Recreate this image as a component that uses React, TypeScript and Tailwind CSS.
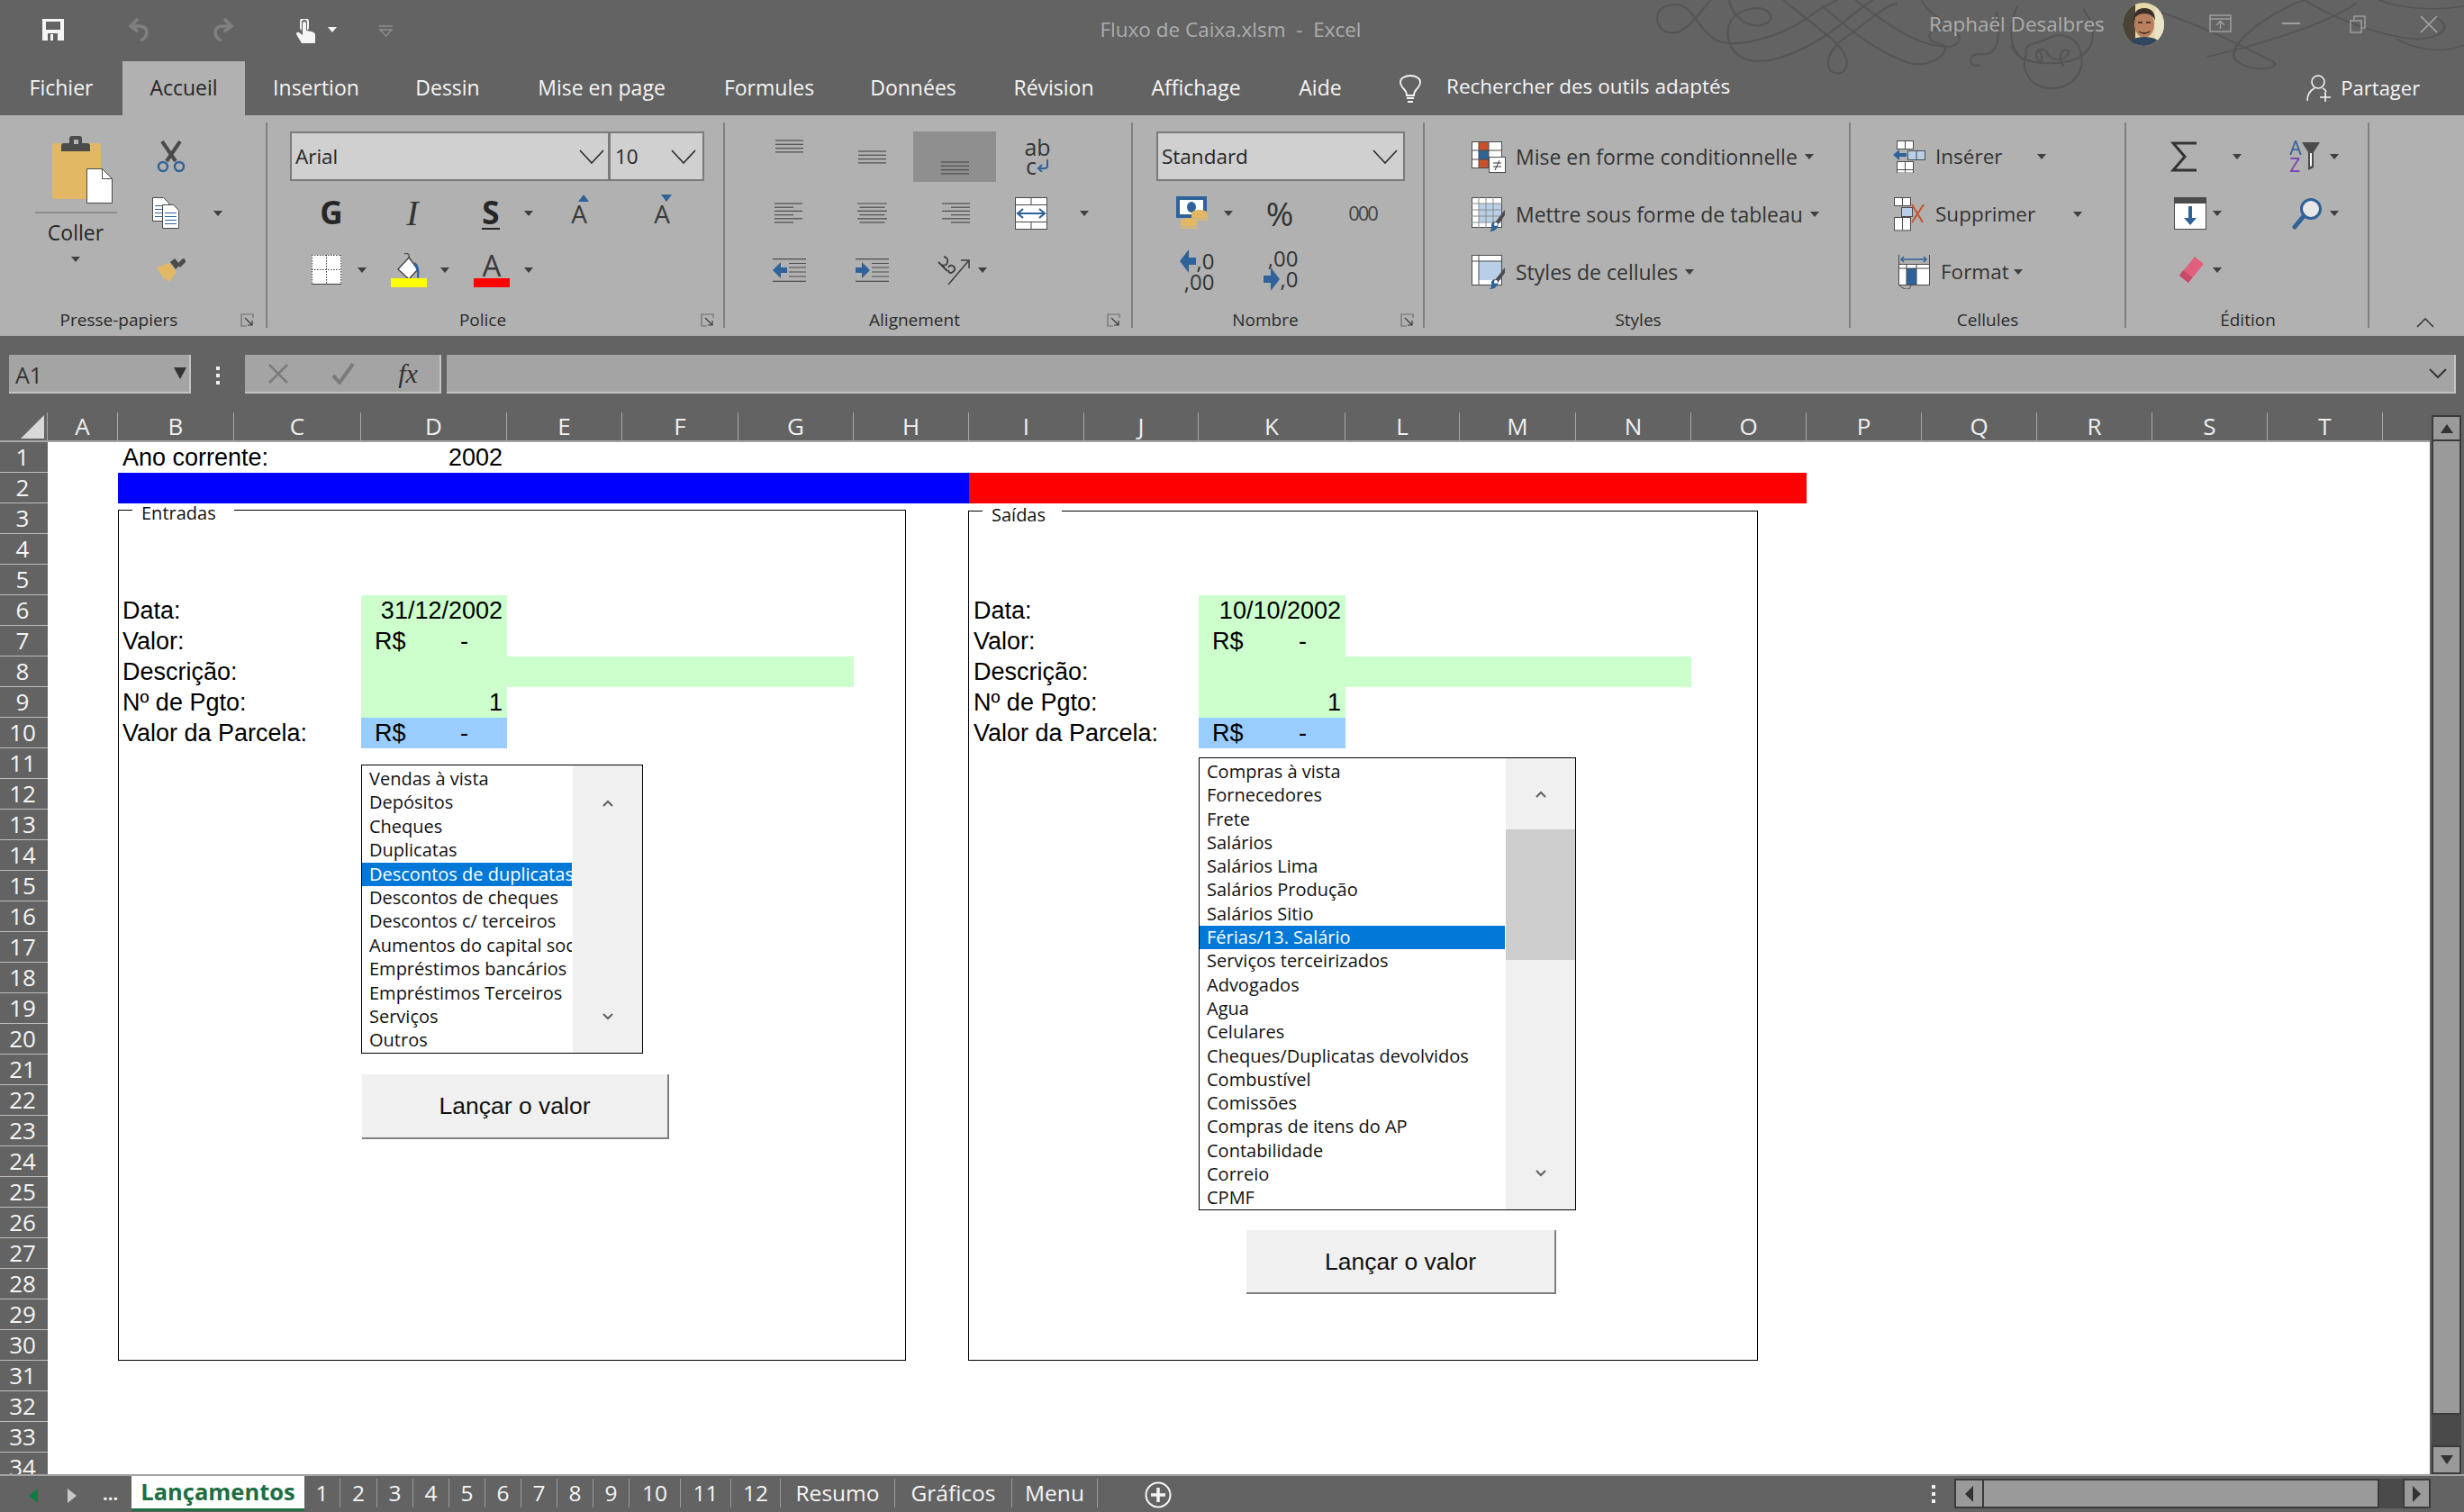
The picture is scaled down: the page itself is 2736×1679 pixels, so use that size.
import type { ReactNode } from 'react';

const SHEET_COLS =
  'grid-cols-[78px_129px_141px_162px_128px_129px_128px_128px_128px_127px_163px_127px_129px_128px_128px_128px_128px_128px_128px_128px_52px]';
const LETTERS = 'ABCDEFGHIJKLMNOPQRST'.split('');
const ROWS = Array.from({ length: 34 }, (_, i) => i + 1);

const ENTRADAS = [
  'Vendas à vista', 'Depósitos', 'Cheques', 'Duplicatas', 'Descontos de duplicatas', 'Descontos de cheques',
  'Descontos c/ terceiros', 'Aumentos do capital social', 'Empréstimos bancários', 'Empréstimos Terceiros', 'Serviços', 'Outros',
];
const SAIDAS = [
  'Compras à vista', 'Fornecedores', 'Frete', 'Salários', 'Salários Lima', 'Salários Produção', 'Salários Sitio',
  'Férias/13. Salário', 'Serviços terceirizados', 'Advogados', 'Agua', 'Celulares', 'Cheques/Duplicatas devolvidos',
  'Combustível', 'Comissões', 'Compras de itens do AP', 'Contabilidade', 'Correio', 'CPMF',
];

const TABS = [
  { label: 'Fichier', w: 'w-[136px]' },
  { label: 'Accueil', w: 'w-[136px]', active: true },
  { label: 'Insertion', w: 'w-[158px]' },
  { label: 'Dessin', w: 'w-[134px]' },
  { label: 'Mise en page', w: 'w-[208px]' },
  { label: 'Formules', w: 'w-[164px]' },
  { label: 'Données', w: 'w-[156px]' },
  { label: 'Révision', w: 'w-[156px]' },
  { label: 'Affichage', w: 'w-[160px]' },
  { label: 'Aide', w: 'w-[116px]' },
];

const SHEET_TABS = [
  { label: '1', w: 'w-[40px]' }, { label: '2', w: 'w-[41px]' }, { label: '3', w: 'w-[40px]' }, { label: '4', w: 'w-[40px]' },
  { label: '5', w: 'w-[40px]' }, { label: '6', w: 'w-[40px]' }, { label: '7', w: 'w-[40px]' }, { label: '8', w: 'w-[40px]' },
  { label: '9', w: 'w-[40px]' }, { label: '10', w: 'w-[57px]' }, { label: '11', w: 'w-[56px]' }, { label: '12', w: 'w-[55px]' },
  { label: 'Resumo', w: 'w-[127px]' }, { label: 'Gráficos', w: 'w-[130px]' }, { label: 'Menu', w: 'w-[95px]' },
];

function Cell({ className = '', children }: { className?: string; children?: ReactNode }) {
  return <div className={`flex shrink-0 items-center justify-center ${className}`}>{children}</div>;
}

function Caret({ color = '#3f3f3f' }: { color?: string }) {
  return (
    <svg width="10" height="6" viewBox="0 0 10 6">
      <path d="M0 0h10L5 6z" fill={color} />
    </svg>
  );
}

function Chevron() {
  return (
    <svg width="28" height="16" viewBox="0 0 28 16" fill="none" stroke="#2b2b2b" strokeWidth="1.6">
      <path d="M1 1l13 14L27 1" />
    </svg>
  );
}

function Launcher() {
  return (
    <svg width="15" height="15" viewBox="0 0 15 15" fill="none" stroke="#3a3a3a" strokeWidth="1.2">
      <path d="M14 5V1H1v13h6" stroke="#6f6f6f" />
      <path d="M5 5l8 8M13 8v5H8" />
    </svg>
  );
}

// ---- Icônes du ruban, dessinées à la taille du pixel ----

function PasteIcon() {
  return (
    <svg width="91" height="76" viewBox="38 151 91 76">
      <rect x="57" y="159" width="54" height="62" rx="3" fill="#e3b865" />
      <path d="M67 168v-6q0-3 3-3h6v-5q0-3 3-3h8q3 0 3 3v5h6q3 0 3 3v6z" fill="#4b4b4b" />
      <rect x="81" y="155" width="5" height="5" fill="#b5b5b5" />
      <path d="M95.500 187.500h17l11 11v27h-28z" fill="#fff" stroke="#4b4b4b" />
      <path d="M112.500 187.500v11h11" fill="none" stroke="#4b4b4b" />
    </svg>
  );
}

function ScissorsIcon() {
  return (
    <svg width="32" height="36" viewBox="0 0 32 36" fill="none">
      <path d="M6 1l15 22M26 1L11 23" stroke="#4a4a4a" strokeWidth="4" />
      <circle cx="7" cy="29" r="5" stroke="#2f6299" strokeWidth="2.4" />
      <circle cx="25" cy="29" r="5" stroke="#2f6299" strokeWidth="2.4" />
    </svg>
  );
}

function CopyIcon() {
  const page = (x: number, y: number) => (
    <g key={x} transform={`translate(${x} ${y})`}>
      <path d="M.5.500h12l6 6v20H.5z" fill="#fff" stroke="#4b4b4b" />
      <path d="M3 9.500h13M3 13.500h13M3 17.500h13M3 21.500h13" stroke="#2f6299" />
    </g>
  );
  return (
    <svg width="31" height="35" viewBox="0 0 31 35">
      {page(0, 0)}
      {page(11, 8)}
    </svg>
  );
}

function BrushIcon() {
  return (
    <svg width="34" height="28" viewBox="0 0 34 28">
      <path d="M1 11l14-5 8 10-8 11-4-4-2 1z" fill="#e3b865" />
      <path d="M16 5l5-4 6 7-5 5z" fill="#4b4b4b" />
      <path d="M24 7l6-6q3 0 3 4l-6 6z" fill="#4b4b4b" />
    </svg>
  );
}

function BordersIcon() {
  return (
    <svg width="33" height="33" viewBox="0 0 33 33">
      <rect width="33" height="33" fill="#fff" />
      <path
        d="M.5 0v33M16.500 0v33M32.500 0v33M0 .5h33M0 16.500h33"
        stroke="#444"
        strokeDasharray="1.500 1.500"
        fill="none"
      />
      <path d="M0 32.500h33" stroke="#444" />
    </svg>
  );
}

function BucketIcon() {
  return (
    <svg width="40" height="38" viewBox="0 0 40 38">
      <path d="M15 1q3-2 5 1l1 6" fill="none" stroke="#4b4b4b" strokeWidth="1.300" />
      <path d="M20 5l10 13-10 11L8 18z" fill="#fff" stroke="#3f3f3f" strokeWidth="1.300" />
      <path d="M27 10q6 5 4 18l-2-1q1-9-4-14z" fill="#2f6299" />
      <rect y="28" width="40" height="10" fill="#ffff00" />
    </svg>
  );
}

function LinesIcon({ kind }: { kind: 'top' | 'middle' | 'bottom' }) {
  const start = kind === 'top' ? 10 : kind === 'middle' ? 22 : 34;
  return (
    <svg width="31" height="56" viewBox="0 0 31 56" stroke="#4d4d4d" strokeWidth="1.200">
      {[0, 1, 2, 3].map((i) => (
        <path key={i} d={`M0 ${start + i * 4.300}h31`} />
      ))}
    </svg>
  );
}

function AlignIcon({ kind }: { kind: 'left' | 'center' | 'right' }) {
  const rows = kind === 'center' ? [33, 28, 33, 28, 33, 28] : [31, 21, 31, 21, 31, 21];
  return (
    <svg width="33" height="24" viewBox="0 0 33 24" stroke="#4d4d4d" strokeWidth="1.200">
      {rows.map((w, i) => {
        const x = kind === 'left' ? 0 : kind === 'right' ? 33 - w : (33 - w) / 2;
        return <path key={i} d={`M${x} ${1 + i * 4.200}h${w}`} />;
      })}
    </svg>
  );
}

function IndentIcon({ dir }: { dir: 'out' | 'in' }) {
  return (
    <svg width="37" height="26" viewBox="0 0 37 26">
      <path d="M0 .7h37M0 25.300h37M18 5.500h19M18 10h19M18 15h19M18 20h19" stroke="#4d4d4d" strokeWidth="1.200" />
      {dir === 'out' ? (
        <path d="M9 4v6h7v6H9v6l-9-9z" fill="#2f6299" />
      ) : (
        <path d="M7 4v6H0v6h7v6l9-9z" fill="#2f6299" />
      )}
    </svg>
  );
}

function MergeIcon() {
  return (
    <svg width="36" height="36" viewBox="0 0 36 36">
      <rect x=".5" y=".5" width="35" height="35" fill="#fff" stroke="#4b4b4b" />
      <path d="M0 8.500h36M0 27.500h36M18 0v8M18 28v8" stroke="#4b4b4b" fill="none" />
      <path d="M3 18h30M9 13l-6 5 6 5M27 13l6 5-6 5" fill="none" stroke="#2f6299" strokeWidth="2.200" />
    </svg>
  );
}

function OrientationIcon() {
  return (
    <svg width="42" height="34" viewBox="0 0 42 34" fill="none" stroke="#3d3d3d" strokeWidth="1.500">
      <path d="M14 33L37 6M28 6h9v9" />
      <path d="M3 8l10 10M9 2q5 1 4 6t-6 3M14 14q3-4 6-1t-1 6-5-2" strokeWidth="1.800" />
    </svg>
  );
}

function WrapIcon() {
  return (
    <div className="flex flex-col items-center leading-none text-[#333]">
      <span className="text-[25px] leading-[20px]">ab</span>
      <span className="flex items-center text-[25px] leading-[22px]">
        c
        <svg width="14" height="14" viewBox="0 0 14 14" fill="none" stroke="#2f6299" strokeWidth="2">
          <path d="M12 0v7q0 3-3 3H2M6 6l-4 4 4 4" />
        </svg>
      </span>
    </div>
  );
}

function MoneyIcon() {
  return (
    <svg width="36" height="38" viewBox="0 0 36 38">
      <rect x="2" y="2" width="30" height="20" fill="#fff" stroke="#2f6299" strokeWidth="4" />
      <ellipse cx="17" cy="12" rx="5" ry="6" fill="#2f6299" />
      <ellipse cx="26" cy="19" rx="9" ry="4" fill="#e3b865" />
      <rect x="17" y="19" width="18" height="8" fill="#e3b865" />
      <path d="M17 24q9 3 18 0M17 28q9 3 18 0" stroke="#b1b1b1" fill="none" />
      <ellipse cx="14" cy="28" rx="9" ry="4" fill="#e3b865" />
      <rect x="5" y="28" width="18" height="8" fill="#e3b865" />
      <path d="M5 33q9 3 18 0" stroke="#b1b1b1" fill="none" />
    </svg>
  );
}

function BlueArrow({ dir }: { dir: 'left' | 'right' }) {
  return (
    <svg width="18" height="26" viewBox="0 0 18 26">
      {dir === 'left' ? <path d="M10 0v9h8v8h-8v9L0 13z" fill="#2f6299" /> : <path d="M8 0v9H0v8h8v9l10-13z" fill="#2f6299" />}
    </svg>
  );
}

function CondFormatIcon() {
  return (
    <svg width="38" height="35" viewBox="0 0 38 35">
      <rect x=".5" y=".5" width="33" height="29" fill="#fff" stroke="#4b4b4b" />
      <rect x="8" y="1" width="11" height="9" fill="#c8502c" />
      <rect x="8" y="10" width="11" height="10" fill="#2f6299" />
      <rect x="8" y="20" width="11" height="9" fill="#c8502c" />
      <path d="M8 0v30M19 0v30M0 10h34M0 20h34" stroke="#4b4b4b" />
      <rect x="19.500" y="17.500" width="18" height="17" fill="#fff" stroke="#4b4b4b" />
      <path d="M24 24h9M24 28h9M31 21l-5 11" stroke="#333" />
    </svg>
  );
}

function TableIcon({ plain = false }: { plain?: boolean }) {
  return (
    <svg width="38" height="38" viewBox="0 0 38 38">
      <rect x=".5" y=".5" width="33" height="33" fill="#fff" stroke="#4b4b4b" />
      <rect x="8" y="7" width="25" height="21" fill="#b9cfe8" />
      {plain ? (
        <path d="M0 7h34M8 0v34" stroke="#4b4b4b" />
      ) : (
        <path d="M0 7h34M0 14h34M0 21h34M0 28h34M8 0v34M16 0v34M24 0v34" stroke="#8a8a8a" />
      )}
      <path d="M37 14L26 28l3 3 8-11z" fill="#4b4b4b" />
      <path d="M25 27q6 2 4 6-2 5-9 5 3-3 2-6t3-5z" fill="#2f6299" />
      <circle cx="27" cy="30" r="2" fill="#fff" />
    </svg>
  );
}

function MiniCells({ x = 0, y = 0, rows, cols }: { x?: number; y?: number; rows: number; cols: number }) {
  const w = 9 * cols;
  const h = 9 * rows;
  return (
    <g transform={`translate(${x} ${y})`}>
      <rect x=".5" y=".5" width={w} height={h} fill="#fff" stroke="#4b4b4b" />
      {Array.from({ length: cols - 1 }, (_, i) => (
        <path key={`c${i}`} d={`M${9 * (i + 1) + 0.5} 0v${h}`} stroke="#4b4b4b" />
      ))}
      {Array.from({ length: rows - 1 }, (_, i) => (
        <path key={`r${i}`} d={`M0 ${9 * (i + 1) + 0.5}h${w}`} stroke="#4b4b4b" />
      ))}
    </g>
  );
}

function InsertIcon() {
  return (
    <svg width="37" height="36" viewBox="0 0 37 36">
      <MiniCells x={4} rows={1} cols={2} />
      <MiniCells x={4} y={23} rows={1} cols={2} />
      <MiniCells x={4} y={32} rows={0.4} cols={2} />
      <rect x="16.500" y="11.500" width="19" height="10" fill="#b9cfe8" stroke="#4b4b4b" />
      <path d="M26 11v11" stroke="#4b4b4b" />
      <path d="M0 16l7-6v4h8v4H7v4z" fill="#2f6299" />
    </svg>
  );
}

function DeleteIcon() {
  return (
    <svg width="37" height="38" viewBox="0 0 37 38">
      <MiniCells x={1} rows={1} cols={2} />
      <MiniCells x={1} y={22} rows={1.600} cols={2} />
      <rect x="9.500" y="11.500" width="12" height="10" fill="#b9cfe8" stroke="#4b4b4b" />
      <path d="M21 8l12 20M34 8L21 28" stroke="#c8502c" strokeWidth="2" />
    </svg>
  );
}

function FormatIcon() {
  return (
    <svg width="36" height="38" viewBox="0 0 36 38">
      <path d="M3 5h28M6 2L3 5l3 3M28 2l3 3-3 3" fill="none" stroke="#2f6299" strokeWidth="1.500" />
      <path d="M.5 0v10M34.500 0v10" stroke="#4b4b4b" />
      <rect x=".5" y="10.500" width="34" height="23" fill="#fff" stroke="#4b4b4b" />
      <rect x="9" y="15" width="11" height="18" fill="#2f6299" />
      <path d="M9 10v24M20 10v24M0 15h35M1 34l6 4h5l2-4" stroke="#4b4b4b" fill="none" />
    </svg>
  );
}

function FillIcon() {
  return (
    <svg width="36" height="36" viewBox="0 0 36 36">
      <rect x=".5" y=".5" width="35" height="35" fill="#fff" stroke="#4b4b4b" />
      <rect width="36" height="7" fill="#4b4b4b" />
      <path d="M16 10h4v13h5l-7 8-7-8h5z" fill="#2f6299" />
    </svg>
  );
}

function FindIcon() {
  return (
    <svg width="34" height="36" viewBox="0 0 34 36" fill="none">
      <circle cx="21" cy="13" r="10.500" fill="#e8e8e8" stroke="#2f6299" strokeWidth="3" />
      <path d="M13 21L3 33" stroke="#2f6299" strokeWidth="5" strokeLinecap="round" />
    </svg>
  );
}

function EraserIcon() {
  return (
    <svg width="30" height="30" viewBox="0 0 30 30">
      <path d="M20 0l10 8-17 21-10-8z" fill="#df5f7d" />
      <path d="M7 15l10 8-4 6-10-8z" fill="#c9496a" />
    </svg>
  );
}

function SortIcon() {
  return (
    <div className="flex items-center">
      <div className="flex flex-col text-[21px] leading-[19px]">
        <span className="text-[#2f6299]">A</span>
        <span className="text-[#7a3fb0]">Z</span>
      </div>
      <svg width="20" height="32" viewBox="0 0 20 32">
        <path d="M0 0h20l-7 11v17l-6 3V11z" fill="#4b4b4b" />
        <path d="M9 12h2v14l-2 1z" fill="#fff" />
      </svg>
    </div>
  );
}

// ---- Éléments de la barre de titre ----

function SaveIcon() {
  return (
    <svg width="24" height="24" viewBox="0 0 24 24">
      <path d="M0 0h24v24H0z" fill="#f5f5f5" />
      <rect x="4" y="3" width="16" height="9" fill="#636363" />
      <rect x="6" y="16" width="11" height="8" fill="#636363" />
      <rect x="9" y="17" width="3" height="7" fill="#f5f5f5" />
    </svg>
  );
}

function UndoIcon({ flip = false }: { flip?: boolean }) {
  return (
    <svg
      width="24"
      height="26"
      viewBox="0 0 24 26"
      fill="none"
      stroke="#808080"
      strokeWidth="3.500"
      className={flip ? '-scale-x-100' : ''}
    >
      <path d="M11 1L3 9l8 6" />
      <path d="M3 9h9q9 0 9 7 0 6-7 9" />
    </svg>
  );
}

function TouchIcon() {
  return (
    <svg width="22" height="27" viewBox="0 0 22 27" fill="#f5f5f5">
      <path d="M5 3a5 5 0 0 1 10 0v7a5 5 0 0 1-2 3V4a3 3 0 0 0-6 0v9a5 5 0 0 1-2-3z" />
      <path d="M8 5a2 2 0 0 1 4 0v8l6 1q4 1 4 4v9H7L1 17q0-3 3-2l4 3z" />
    </svg>
  );
}

// Arabesques du thème Office, en filigrane derrière la barre de titre
function Swirls() {
  return (
    <svg
      className="pointer-events-none absolute right-0 top-0"
      width="1000"
      height="128"
      viewBox="1736 0 1000 128"
      fill="none"
      stroke="#555555"
      strokeWidth="2.200"
    >
      <g transform="translate(1840 0) scale(0.3333)" strokeWidth="6.500">
        <path d="M180 0C140 40 100 110 50 110 15 110 0 80 0 60 0 30 30 15 60 15c60 0 70 75 130 115 60 35 210 0 310-70 40-30 70-45 100-60" />
        <path d="M240 0c5 40 50 90 100 85 35-5 50-25 30-45-30-25-100-10-125 30-20 40-10 100 45 125 60 25 160-5 270-75C620 80 680 20 720 0" />
        <path d="M420 0c50 40 100 80 150 120 50 40 70 80 60 105-15 30-55 25-60-10-5-35 30-75 80-105C700 70 760 20 800 10" />
        <path d="M550 20c70 60 170 150 290 190 60 15 120-20 120-50 0-20-40-10-50-30-15-35 40-50 90-20 20 20 0 50-40 45C850 150 740 60 660 0" />
        <path d="M880 0c20 40 50 50 70 70" />
        <path d="M1130 40c15 60 10 130-30 140-20 5-40-10-55 15-5 20 15 30 30 20" />
        <path d="M1200 20c-30 70-30 140 20 180" />
        <path d="M1180 150c10 40 50 55 100 60 80 5 140-10 165-60 20-50-5-90-25-120" />
        <path d="M1270 170c20 10 10 60 0 30-20-30 10-50 30-25 20 45 80 15 70-5-20-15-40 20-15 50" />
        <path d="M1230 180c-20 50 10 110 80 115 80 0 120-65 100-125-10-40-60-70-110-40-40 20-80 10-70 50" />
      </g>
      <g transform="translate(1736 0) scale(0.6378 0.3333)" strokeWidth="4.500">
        <path d="M1040 40c60 40 130 100 190 160 30 25-30 50-60 0-20-50 60-160 120-200" />
        <path d="M1290 0c50 60 130 120 190 130 50 0 70-40 40-70" />
        <path d="M1380 10c-40 60-150 130-260 180" />
        <path d="M1420 0c50 40 120 30 148 20" />
        <path d="M1450 130c50 50 90 40 118 20" />
      </g>
    </svg>
  );
}

function Avatar() {
  return (
    <svg width="46" height="48" viewBox="0 0 46 48">
      <clipPath id="avatar">
        <ellipse cx="23" cy="24" rx="23" ry="24" />
      </clipPath>
      <g clipPath="url(#avatar)">
        <rect width="46" height="48" fill="#e6d9a8" />
        <rect width="14" height="48" fill="#4b4436" />
        <rect x="36" width="10" height="48" fill="#e9e4c8" />
        <ellipse cx="24" cy="24" rx="11" ry="15" fill="#b9805f" />
        <path d="M12 20q0-14 12-14t12 14q-3-8-12-8t-12 8z" fill="#3a2f28" />
        <path d="M17 22h5M26 22h5M18 32q6 4 12 0" stroke="#2c1f1a" strokeWidth="1.500" fill="none" />
        <path d="M4 48q4-10 20-10t20 10z" fill="#31465d" />
      </g>
    </svg>
  );
}

function TitleBar() {
  return (
    <div className="flex h-[68px] items-start">
      <Cell className="mt-[21px] ml-[47px]"><SaveIcon /></Cell>
      <Cell className="mt-[20px] ml-[71px]"><UndoIcon /></Cell>
      <Cell className="mt-[20px] ml-[70px]"><UndoIcon flip /></Cell>
      <Cell className="mt-[21px] ml-[68px]"><TouchIcon /></Cell>
      <Cell className="mt-[30px] ml-[14px]"><Caret color="#f5f5f5" /></Cell>
      <Cell className="mt-[28px] ml-[47px]">
        <svg width="15" height="13" viewBox="0 0 15 13" fill="none" stroke="#8f8f8f" strokeWidth="1.300">
          <path d="M0 1h15M1 5h13L7.500 12z" />
        </svg>
      </Cell>
      <div className="ml-[783px] mt-[17px] w-[295px] whitespace-nowrap text-center text-[22.500px] leading-[32px] text-[#adadad]">
        Fluxo de Caixa.xlsm&nbsp; -&nbsp; Excel
      </div>
      <div className="ml-[628px] mt-[12px] w-[194px] whitespace-nowrap text-[22.500px] leading-[30px] text-[#adadad]">
        Raphaël Desalbres
      </div>
      <Cell className="ml-[21px] mt-[3px]"><Avatar /></Cell>
      <Cell className="ml-[50px] mt-[16px]">
        <svg width="25" height="20" viewBox="0 0 25 20" fill="none" stroke="#9f9f9f" strokeWidth="1.500">
          <path d="M1 1h23v18H1zM1 5h23M12.500 16V8M8 12l4.500-4.500L17 12" />
        </svg>
      </Cell>
      <Cell className="ml-[56px] mt-[25px]">
        <div className="h-[2px] w-[20px] bg-[#9f9f9f]" />
      </Cell>
      <Cell className="ml-[55px] mt-[17px]">
        <svg width="18" height="20" viewBox="0 0 18 20" fill="none" stroke="#9f9f9f" strokeWidth="1.500">
          <path d="M1 6h12v13H1zM5 6V1h12v13h-4" />
        </svg>
      </Cell>
      <Cell className="ml-[60px] mt-[17px]">
        <svg width="20" height="20" viewBox="0 0 20 20" fill="none" stroke="#a8a8a8" strokeWidth="1.500">
          <path d="M1 1l18 18M19 1L1 19" />
        </svg>
      </Cell>
    </div>
  );
}

function TabRow() {
  return (
    <div className="flex h-[60px] items-stretch">
      {TABS.map((tab) => (
        <div
          key={tab.label}
          className={`flex shrink-0 items-center justify-center pb-[2px] text-[23px] ${tab.w} ${
            tab.active ? 'bg-[#b1b1b1] text-[#262626]' : 'text-[#f5f5f5]'
          }`}
        >
          {tab.label}
        </div>
      ))}
      <Cell className="w-[84px]">
        <svg width="24" height="31" viewBox="0 0 24 31" fill="none" stroke="#f5f5f5" strokeWidth="1.800">
          <path d="M8 23q0-4-3-7-4-4-4-8a11 7 0 0 1 22 0q0 4-4 8-3 3-3 7z" />
          <path d="M8 26h8M9 30h6" />
        </svg>
      </Cell>
      <div className="-ml-[2px] flex items-center pb-[4px] text-[22.500px] text-[#f5f5f5]">Rechercher des outils adaptés</div>
      <Cell className="ml-[640px]">
        <svg width="28" height="30" viewBox="0 0 28 30" fill="none" stroke="#f5f5f5" strokeWidth="1.600">
          <circle cx="13" cy="8" r="7" />
          <path d="M1 29q0-10 8-14M18 15q3 1 4 4M15 25h12M21 19v11" />
        </svg>
      </Cell>
      <div className="ml-[10px] flex items-center pb-[2px] text-[22px] text-[#f5f5f5]">Partager</div>
    </div>
  );
}

// ---- Ruban ----

function RibbonGroup({
  className,
  label,
  labelClass,
  launcher = false,
  children,
}: {
  className: string;
  label: string;
  labelClass: string;
  launcher?: boolean;
  children: ReactNode;
}) {
  return (
    <div className={`flex h-[228px] shrink-0 flex-col border-r-2 border-[#808080] pt-[6px] ${className}`}>
      <div className="h-[189px] shrink-0">{children}</div>
      <div className="mt-[12px] flex h-[24px] items-center">
        <div className={`shrink-0 text-center text-[19px] leading-[24px] text-[#2b2b2b] ${labelClass}`}>{label}</div>
        {launcher && (
          <Cell className="w-[20px]">
            <Launcher />
          </Cell>
        )}
      </div>
    </div>
  );
}

function Row({ className = 'h-[63px]', children }: { className?: string; children: ReactNode }) {
  return <div className={`flex items-center ${className}`}>{children}</div>;
}

function ComboBox({ className, label, pad }: { className: string; label: string; pad: string }) {
  return (
    <div className={`flex h-[55px] items-center border-2 border-[#7a7a7a] bg-[#d0d0d0] ${pad} ${className}`}>
      <span className="text-[22.500px] text-[#262626]">{label}</span>
      <span className="ml-auto">
        <Chevron />
      </span>
    </div>
  );
}

function Clipboard() {
  return (
    <RibbonGroup className="w-[297px]" label="Presse-papiers" labelClass="w-[264px]" launcher>
      <div className="flex">
        <div className="flex w-[168px] flex-col items-center">
          <div className="mt-[9px]"><PasteIcon /></div>
          <div className="mt-[8px] h-[2px] w-[91px] bg-[#8d8d8d]" />
          <div className="mt-[6px] h-[30px] text-[23px] leading-[30px] text-[#262626]">Coller</div>
          <div className="mt-[12px] leading-none"><Caret /></div>
        </div>
        <div>
          <Row>
            <Cell className="w-[44px]"><ScissorsIcon /></Cell>
          </Row>
          <Row>
            <Cell className="w-[32px]"><CopyIcon /></Cell>
            <Cell className="w-[84px]"><Caret /></Cell>
          </Row>
          <Row>
            <Cell className="w-[44px]"><BrushIcon /></Cell>
          </Row>
        </div>
      </div>
    </RibbonGroup>
  );
}

function FontGroup() {
  return (
    <RibbonGroup className="w-[508px]" label="Police" labelClass="w-[478px]" launcher>
      <Row className="h-[63px] pl-[25px]">
        <ComboBox className="w-[355px]" pad="pl-[4px] pr-[4px]" label="Arial" />
        <ComboBox className="-ml-[1px] w-[106px]" pad="pl-[5px] pr-[7px]" label="10" />
      </Row>
      <Row className="h-[63px] pl-[39px]">
        <Cell className="w-[64px] text-[35px] font-bold text-[#262626]">G</Cell>
        <Cell className="w-[116px] font-['Liberation_Serif',serif] text-[40px] italic text-[#333]">I</Cell>
        <Cell className="w-[58px] text-[35px] font-bold leading-[38px] text-[#262626]">
          <span className="border-b-2 border-[#262626] leading-[35px]">S</span>
        </Cell>
        <Cell className="w-[26px]"><Caret /></Cell>
        <Cell className="w-[86px] text-[28px] text-[#3a3a3a]">
          <span className="relative leading-[32px]">
            A
            <svg className="absolute -top-[5px] left-[8px]" width="12" height="8" viewBox="0 0 12 8">
              <path d="M0 8h12L6 0z" fill="#2f6299" />
            </svg>
          </span>
        </Cell>
        <Cell className="w-[98px] text-[28px] text-[#3a3a3a]">
          <span className="relative leading-[32px]">
            A
            <svg className="absolute -top-[5px] left-[8px]" width="12" height="8" viewBox="0 0 12 8">
              <path d="M0 0h12L6 8z" fill="#2f6299" />
            </svg>
          </span>
        </Cell>
      </Row>
      <Row className="h-[63px] pl-[39px]">
        <Cell className="w-[52px]"><BordersIcon /></Cell>
        <Cell className="w-[28px]"><Caret /></Cell>
        <Cell className="ml-[18px] w-[40px]"><BucketIcon /></Cell>
        <Cell className="w-[40px]"><Caret /></Cell>
        <Cell className="w-[64px]">
          <div className="flex flex-col items-center">
            <span className="text-[33px] leading-[28px] text-[#3a3a3a]">A</span>
            <span className="h-[10px] w-[40px] bg-[#ff0000]" />
          </div>
        </Cell>
        <Cell className="w-[18px]"><Caret /></Cell>
      </Row>
    </RibbonGroup>
  );
}

function AlignmentGroup() {
  return (
    <RibbonGroup className="w-[453px]" label="Alignement" labelClass="w-[421px]" launcher>
      <Row className="h-[63px] pl-[25px]">
        <Cell className="w-[92px]"><LinesIcon kind="top" /></Cell>
        <Cell className="w-[92px]"><LinesIcon kind="middle" /></Cell>
        <Cell className="h-[56px] w-[92px] bg-[#8f8f8f]"><LinesIcon kind="bottom" /></Cell>
        <Cell className="w-[92px]"><WrapIcon /></Cell>
      </Row>
      <Row className="h-[63px] pl-[25px]">
        <Cell className="w-[92px]"><AlignIcon kind="left" /></Cell>
        <Cell className="w-[92px]"><AlignIcon kind="center" /></Cell>
        <Cell className="w-[92px]"><AlignIcon kind="right" /></Cell>
        <Cell className="w-[78px]"><MergeIcon /></Cell>
        <Cell className="w-[40px]"><Caret /></Cell>
      </Row>
      <Row className="h-[63px] pl-[25px]">
        <Cell className="w-[92px]"><IndentIcon dir="out" /></Cell>
        <Cell className="w-[92px]"><IndentIcon dir="in" /></Cell>
        <Cell className="ml-[23px] w-[46px]"><OrientationIcon /></Cell>
        <Cell className="w-[16px]"><Caret /></Cell>
      </Row>
    </RibbonGroup>
  );
}

function NumberGroup() {
  return (
    <RibbonGroup className="w-[324px]" label="Nombre" labelClass="w-[294px]" launcher>
      <Row className="h-[63px] pl-[26px]">
        <ComboBox className="w-[276px]" pad="pl-[4px] pr-[6px]" label="Standard" />
      </Row>
      <Row className="h-[63px] pl-[46px]">
        <Cell className="w-[40px]"><MoneyIcon /></Cell>
        <Cell className="w-[40px]"><Caret /></Cell>
        <Cell className="w-[74px] text-[37px] text-[#333]">%</Cell>
        <Cell className="w-[110px] text-[22px] tracking-[-2px] text-[#444]">000</Cell>
      </Row>
      <Row className="h-[63px] pl-[41px]">
        <Cell className="w-[60px]">
          <div className="flex flex-col items-end text-[24px] leading-[20px] text-[#333]">
            <span className="flex items-center gap-[1px]"><BlueArrow dir="left" />,0</span>
            <span>,00</span>
          </div>
        </Cell>
        <Cell className="ml-[28px] w-[70px]">
          <div className="flex flex-col items-end text-[24px] leading-[20px] text-[#333]">
            <span>,00</span>
            <span className="flex items-center gap-[1px]"><BlueArrow dir="right" />,0</span>
          </div>
        </Cell>
      </Row>
    </RibbonGroup>
  );
}

function StylesGroup() {
  const items = [
    { label: 'Mise en forme conditionnelle', icon: <CondFormatIcon /> },
    { label: 'Mettre sous forme de tableau', icon: <TableIcon /> },
    { label: 'Styles de cellules', icon: <TableIcon plain /> },
  ];
  return (
    <RibbonGroup className="w-[473px]" label="Styles" labelClass="w-[474px]">
      {items.map((item) => (
        <Row key={item.label} className="h-[64px] pl-[51px]">
          <Cell className="w-[40px]">{item.icon}</Cell>
          <span className="ml-[10px] whitespace-nowrap text-[23px] text-[#333]">{item.label}</span>
          <span className="ml-[8px] flex"><Caret /></span>
        </Row>
      ))}
    </RibbonGroup>
  );
}

function CellsGroup() {
  return (
    <RibbonGroup className="w-[306px]" label="Cellules" labelClass="w-[304px]">
      <Row className="h-[64px] pl-[45px]">
        <Cell className="w-[40px]"><InsertIcon /></Cell>
        <span className="ml-[9px] w-[100px] text-[22.500px] text-[#333]">Insérer</span>
        <Cell className="w-[36px]"><Caret /></Cell>
      </Row>
      <Row className="h-[64px] pl-[45px]">
        <Cell className="w-[40px]"><DeleteIcon /></Cell>
        <span className="ml-[9px] w-[140px] text-[22.500px] text-[#333]">Supprimer</span>
        <Cell className="w-[36px]"><Caret /></Cell>
      </Row>
      <Row className="h-[64px] pl-[49px]">
        <Cell className="w-[44px]"><FormatIcon /></Cell>
        <span className="ml-[7px] w-[78px] text-[22.500px] text-[#333]">Format</span>
        <Cell className="w-[16px]"><Caret /></Cell>
      </Row>
    </RibbonGroup>
  );
}

function EditGroup() {
  return (
    <RibbonGroup className="w-[270px]" label="Édition" labelClass="w-[270px]">
      <Row className="h-[63px] pl-[44px]">
        <Cell className="w-[40px]">
          <svg width="30" height="34" viewBox="0 0 30 34" fill="none" stroke="#333" strokeWidth="3">
            <path d="M29 2H3l13 15L3 32h26" />
          </svg>
        </Cell>
        <Cell className="ml-[19px] w-[40px]"><Caret /></Cell>
        <Cell className="ml-[35px] w-[40px]"><SortIcon /></Cell>
        <Cell className="w-[26px]"><Caret /></Cell>
      </Row>
      <Row className="h-[63px] pl-[51px]">
        <Cell className="w-[40px]"><FillIcon /></Cell>
        <Cell className="w-[20px]"><Caret /></Cell>
        <Cell className="ml-[70px] w-[40px]"><FindIcon /></Cell>
        <Cell className="w-[20px]"><Caret /></Cell>
      </Row>
      <Row className="h-[63px] pl-[51px]">
        <Cell className="w-[40px]"><EraserIcon /></Cell>
        <Cell className="w-[20px]"><Caret /></Cell>
      </Row>
    </RibbonGroup>
  );
}

function Ribbon() {
  return (
    <div className="flex h-[245px] items-start bg-[#b1b1b1] pt-[8px]">
      <Clipboard />
      <FontGroup />
      <AlignmentGroup />
      <NumberGroup />
      <StylesGroup />
      <CellsGroup />
      <EditGroup />
      <div className="flex h-[228px] items-end pl-[52px]">
        <svg width="20" height="11" viewBox="0 0 20 11" fill="none" stroke="#333" strokeWidth="1.500">
          <path d="M1 10l9-9 9 9" />
        </svg>
      </div>
    </div>
  );
}

function FormulaBar() {
  return (
    <div className="flex h-[85px] items-start pt-[21px]">
      <div className="ml-[10px] flex h-[43px] w-[202px] items-center border-b-2 border-r-2 border-[#c4c4c4] bg-[#a4a4a4] pl-[7px] pr-[3px]">
        <span className="pt-[3px] text-[25px] leading-[30px] text-[#333]">A1</span>
        <span className="ml-auto flex">
          <svg width="14" height="13" viewBox="0 0 14 13">
            <path d="M0 0h14L7 13z" fill="#333" />
          </svg>
        </span>
      </div>
      <div className="ml-[28px] mt-[13px] flex flex-col gap-[4px]">
        <span className="h-[4px] w-[4px] bg-[#f0f0f0]" />
        <span className="h-[4px] w-[4px] bg-[#f0f0f0]" />
        <span className="h-[4px] w-[4px] bg-[#f0f0f0]" />
      </div>
      <div className="ml-[28px] flex h-[43px] w-[218px] items-center border-b-2 border-r-2 border-[#c4c4c4] bg-[#a4a4a4]">
        <Cell className="ml-[13px] w-[48px]">
          <svg width="24" height="22" viewBox="0 0 24 22" fill="none" stroke="#7b7b7b" strokeWidth="2.500">
            <path d="M2 1l20 20M22 1L2 21" />
          </svg>
        </Cell>
        <Cell className="ml-[24px] w-[48px]">
          <svg width="26" height="24" viewBox="0 0 26 24" fill="none" stroke="#7b7b7b" strokeWidth="4">
            <path d="M2 14l7 8L24 1" />
          </svg>
        </Cell>
        <Cell className="ml-[24px] w-[48px] font-['Liberation_Serif',serif] text-[30px] italic text-[#333]">fx</Cell>
      </div>
      <div className="ml-[6px] flex h-[43px] w-[2231px] items-center justify-end border-b-2 border-r-2 border-[#c4c4c4] bg-[#a4a4a4] pr-[8px]">
        <svg width="20" height="11" viewBox="0 0 20 11" fill="none" stroke="#333" strokeWidth="2">
          <path d="M1 1l9 9 9-9" />
        </svg>
      </div>
    </div>
  );
}

// ---- Feuille de calcul ----

function FormCells({
  label,
  value,
  wide,
  amountPad,
  date,
}: {
  label: string;
  value: string;
  wide: string;
  amountPad: string;
  date: string;
}) {
  const labels = [
    { text: 'Data:', row: 'row-start-6' },
    { text: 'Valor:', row: 'row-start-7' },
    { text: 'Descrição:', row: 'row-start-8' },
    { text: 'Nº de Pgto:', row: 'row-start-9' },
    { text: 'Valor da Parcela:', row: 'row-start-10' },
  ];
  return (
    <>
      {labels.map((l) => (
        <div key={l.text} className={`col-span-2 whitespace-nowrap pl-[5px] ${label} ${l.row}`}>
          {l.text}
        </div>
      ))}
      <div className={`row-start-6 bg-[#ccffcc] pr-[5px] text-right ${value}`}>{date}</div>
      <div className={`row-start-7 flex justify-between bg-[#ccffcc] ${amountPad} ${value}`}>
        <span>R$</span>
        <span>-</span>
      </div>
      <div className={`row-start-8 bg-[#ccffcc] ${wide}`} />
      <div className={`row-start-9 bg-[#ccffcc] pr-[5px] text-right ${value}`}>1</div>
      <div className={`row-start-10 flex justify-between bg-[#99ccff] ${amountPad} ${value}`}>
        <span>R$</span>
        <span>-</span>
      </div>
    </>
  );
}

function GroupBox({ className, label, gapClass }: { className: string; label: string; gapClass: string }) {
  return (
    <div className={`absolute border-[1.500px] border-black ${className}`}>
      <span
        className={`absolute h-[22px] bg-white pl-[10px] font-['Open_Sans',sans-serif] text-[20px] leading-[22px] text-[#111] ${gapClass}`}
      >
        {label}
      </span>
    </div>
  );
}

function ListBox({
  className,
  items,
  selected,
  thumb = false,
  itemClass,
  topClass,
  bottomClass,
}: {
  className: string;
  items: string[];
  selected: string;
  thumb?: boolean;
  itemClass: string;
  topClass: string;
  bottomClass: string;
}) {
  return (
    <div className={`absolute flex border-[1.500px] border-black bg-white ${className}`}>
      <div className="min-w-0 flex-1 overflow-hidden pt-[2px]">
        {items.map((item) => (
          <div
            key={item}
            className={`whitespace-nowrap pl-[8px] font-['Open_Sans',sans-serif] text-[20px] leading-[26px] ${itemClass} ${
              item === selected ? 'bg-[#0078d7] text-white' : 'text-[#111]'
            }`}
          >
            {item}
          </div>
        ))}
      </div>
      <div className="ml-[1px] flex w-[77px] shrink-0 flex-col bg-[#f0f0f0]">
        <Cell className={topClass}>
          <svg width="12" height="8" viewBox="0 0 12 8" fill="none" stroke="#606060" strokeWidth="2">
            <path d="M1 7l5-5 5 5" />
          </svg>
        </Cell>
        {thumb && <div className="h-[145px] bg-[#cdcdcd]" />}
        <div className="flex-1" />
        <Cell className={bottomClass}>
          <svg width="12" height="8" viewBox="0 0 12 8" fill="none" stroke="#606060" strokeWidth="2">
            <path d="M1 1l5 5 5-5" />
          </svg>
        </Cell>
      </div>
    </div>
  );
}

function PushButton({ className }: { className: string }) {
  return (
    <div
      className={`absolute flex items-center justify-center border-b-2 border-r-2 border-[#808080] bg-[#f0f0f0] text-[26.500px] text-[#111] ${className}`}
    >
      Lançar o valor
    </div>
  );
}

function Sheet() {
  return (
    <div className="relative flex-1 overflow-hidden bg-white font-['Liberation_Sans',Arial,sans-serif] text-[27px] leading-[34px] text-black">
      <div className={`grid auto-rows-[34px] ${SHEET_COLS}`}>
        <div className="col-span-2 col-start-2 row-start-1 whitespace-nowrap pl-[5px]">Ano corrente:</div>
        <div className="col-start-4 row-start-1 pr-[5px] text-right">2002</div>
        <div className="col-span-7 col-start-2 row-start-2 bg-[#0000ff]" />
        <div className="col-span-7 col-start-9 row-start-2 bg-[#ff0000]" />
        <FormCells
          label="col-start-2"
          value="col-start-4"
          wide="col-span-4 col-start-4"
          amountPad="pl-[15px] pr-[43px]"
          date="31/12/2002"
        />
        <FormCells
          label="col-start-9"
          value="col-start-11"
          wide="col-span-4 col-start-11"
          amountPad="pl-[15px] pr-[43px]"
          date="10/10/2002"
        />
      </div>

      <GroupBox className="left-[78px] top-[75px] h-[945px] w-[875px]" label="Entradas" gapClass="-top-[8px] left-[15px] w-[113px]" />
      <GroupBox className="left-[1022px] top-[76px] h-[944px] w-[877px]" label="Saídas" gapClass="-top-[7px] left-[15px] w-[88px]" />

      <ListBox
        className="left-[348px] top-[358px] h-[321px] w-[313px]"
        items={ENTRADAS}
        selected="Descontos de duplicatas"
        itemClass="h-[26.400px]"
        topClass="h-[84px]"
        bottomClass="h-[80px]"
      />
      <PushButton className="left-[349px] top-[702px] h-[72px] w-[341px]" />

      <ListBox
        className="left-[1278px] top-[350px] h-[503px] w-[419px]"
        items={SAIDAS}
        selected="Férias/13. Salário"
        thumb
        itemClass="h-[26.300px]"
        topClass="h-[79px]"
        bottomClass="h-[80px]"
      />
      <PushButton className="left-[1331px] top-[875px] h-[71px] w-[344px]" />
    </div>
  );
}

function VerticalScroll() {
  return (
    <div className="flex w-[38px] shrink-0 flex-col pl-[2px] pr-[3px] pt-[3px]">
      <Cell className="h-[29px] border-2 border-[#3a3a3a] bg-[#9a9a9a]">
        <svg width="14" height="10" viewBox="0 0 14 10">
          <path d="M0 10h14L7 0z" fill="#333" />
        </svg>
      </Cell>
      <div className="h-[1082px] border-2 border-t-0 border-[#3a3a3a] bg-[#9a9a9a]" />
      <div className="h-[34px] bg-[#4a4a4a]" />
      <Cell className="h-[32px] border-2 border-[#3a3a3a] bg-[#9a9a9a]">
        <svg width="14" height="10" viewBox="0 0 14 10">
          <path d="M0 0h14L7 10z" fill="#333" />
        </svg>
      </Cell>
    </div>
  );
}

function SheetArea() {
  return (
    <div className="flex h-[1179px]">
      <div className="flex w-[2698px] flex-col">
        <div className="flex h-[33px] shrink-0 border-b-2 border-[#a8a8a8]">
          <div className="flex w-[53px] shrink-0 items-end justify-end border-r border-[#a8a8a8] pb-[2px] pr-[3px]">
            <svg width="26" height="26" viewBox="0 0 26 26">
              <path d="M26 0v26H0z" fill="#d9d9d9" />
            </svg>
          </div>
          <div className={`grid flex-1 ${SHEET_COLS}`}>
            {LETTERS.map((l) => (
              <div key={l} className="flex items-center justify-center border-r border-[#a8a8a8] text-[26px] leading-[31px] text-[#f0f0f0]">
                {l}
              </div>
            ))}
          </div>
        </div>
        <div className="flex min-h-0 flex-1">
          <div className="w-[53px] shrink-0 overflow-hidden">
            {ROWS.map((r) => (
              <div
                key={r}
                className="flex h-[34px] items-center justify-center border-b border-[#bdbdbd] pr-[3px] text-[26px] leading-[33px] text-[#f5f5f5]"
              >
                {r}
              </div>
            ))}
          </div>
          <Sheet />
        </div>
      </div>
      <VerticalScroll />
    </div>
  );
}

function SheetTabs() {
  return (
    <div className="flex h-[42px] items-start border-t-2 border-[#a3a3a3] text-[24.500px] text-[#f5f5f5]">
      <Cell className="mt-[14px] ml-[32px] w-[10px]">
        <svg width="10" height="16" viewBox="0 0 10 16">
          <path d="M10 0v16L0 8z" fill="#107c41" />
        </svg>
      </Cell>
      <Cell className="mt-[14px] ml-[33px] w-[10px]">
        <svg width="10" height="16" viewBox="0 0 10 16">
          <path d="M0 0v16l10-8z" fill="#c8c8c8" />
        </svg>
      </Cell>
      <div className="ml-[29px] mt-[3px] w-[32px] text-[20px] font-bold leading-[34px]">...</div>
      <div className="flex h-[39px] w-[192px] shrink-0 items-center justify-center border-b-[3px] border-[#1e6e42] bg-white pb-[2px] text-[25.500px] font-bold text-[#1e6e42]">
        Lançamentos
      </div>
      {SHEET_TABS.map((tab) => (
        <div
          key={tab.label}
          className={`mt-[3px] flex h-[32px] shrink-0 items-center justify-center border-r border-[#9a9a9a] ${tab.w}`}
        >
          {tab.label}
        </div>
      ))}
      <Cell className="ml-[52px] mt-[6px]">
        <svg width="30" height="30" viewBox="0 0 30 30" fill="none" stroke="#f5f5f5" strokeWidth="2">
          <circle cx="15" cy="15" r="13.500" />
          <path d="M15 7v16M7 15h16" strokeWidth="3.500" />
        </svg>
      </Cell>
      <div className="ml-[844px] mt-[10px] flex flex-col gap-[4px]">
        <span className="h-[4px] w-[4px] bg-[#f0f0f0]" />
        <span className="h-[4px] w-[4px] bg-[#f0f0f0]" />
        <span className="h-[4px] w-[4px] bg-[#f0f0f0]" />
      </div>
      <div className="ml-[21px] mt-[3px] flex h-[33px] w-[529px] shrink-0">
        <Cell className="w-[33px] border-2 border-[#3a3a3a] bg-[#9a9a9a]">
          <svg width="9" height="18" viewBox="0 0 9 18">
            <path d="M9 0v18L0 9z" fill="#333" />
          </svg>
        </Cell>
        <div className="w-[439px] border-y-2 border-r-2 border-[#3a3a3a] bg-[#9a9a9a]" />
        <div className="w-[26px] bg-[#4a4a4a]" />
        <Cell className="w-[31px] border-2 border-[#3a3a3a] bg-[#9a9a9a]">
          <svg width="9" height="18" viewBox="0 0 9 18">
            <path d="M0 0v18l9-9z" fill="#333" />
          </svg>
        </Cell>
      </div>
    </div>
  );
}

export default function App() {
  return (
    <div className="h-[1679px] w-[2736px] overflow-hidden bg-[#636363] font-['Open_Sans',sans-serif]">
      <div className="relative">
        <Swirls />
        <div className="relative">
          <TitleBar />
          <TabRow />
        </div>
      </div>
      <Ribbon />
      <FormulaBar />
      <SheetArea />
      <SheetTabs />
    </div>
  );
}
